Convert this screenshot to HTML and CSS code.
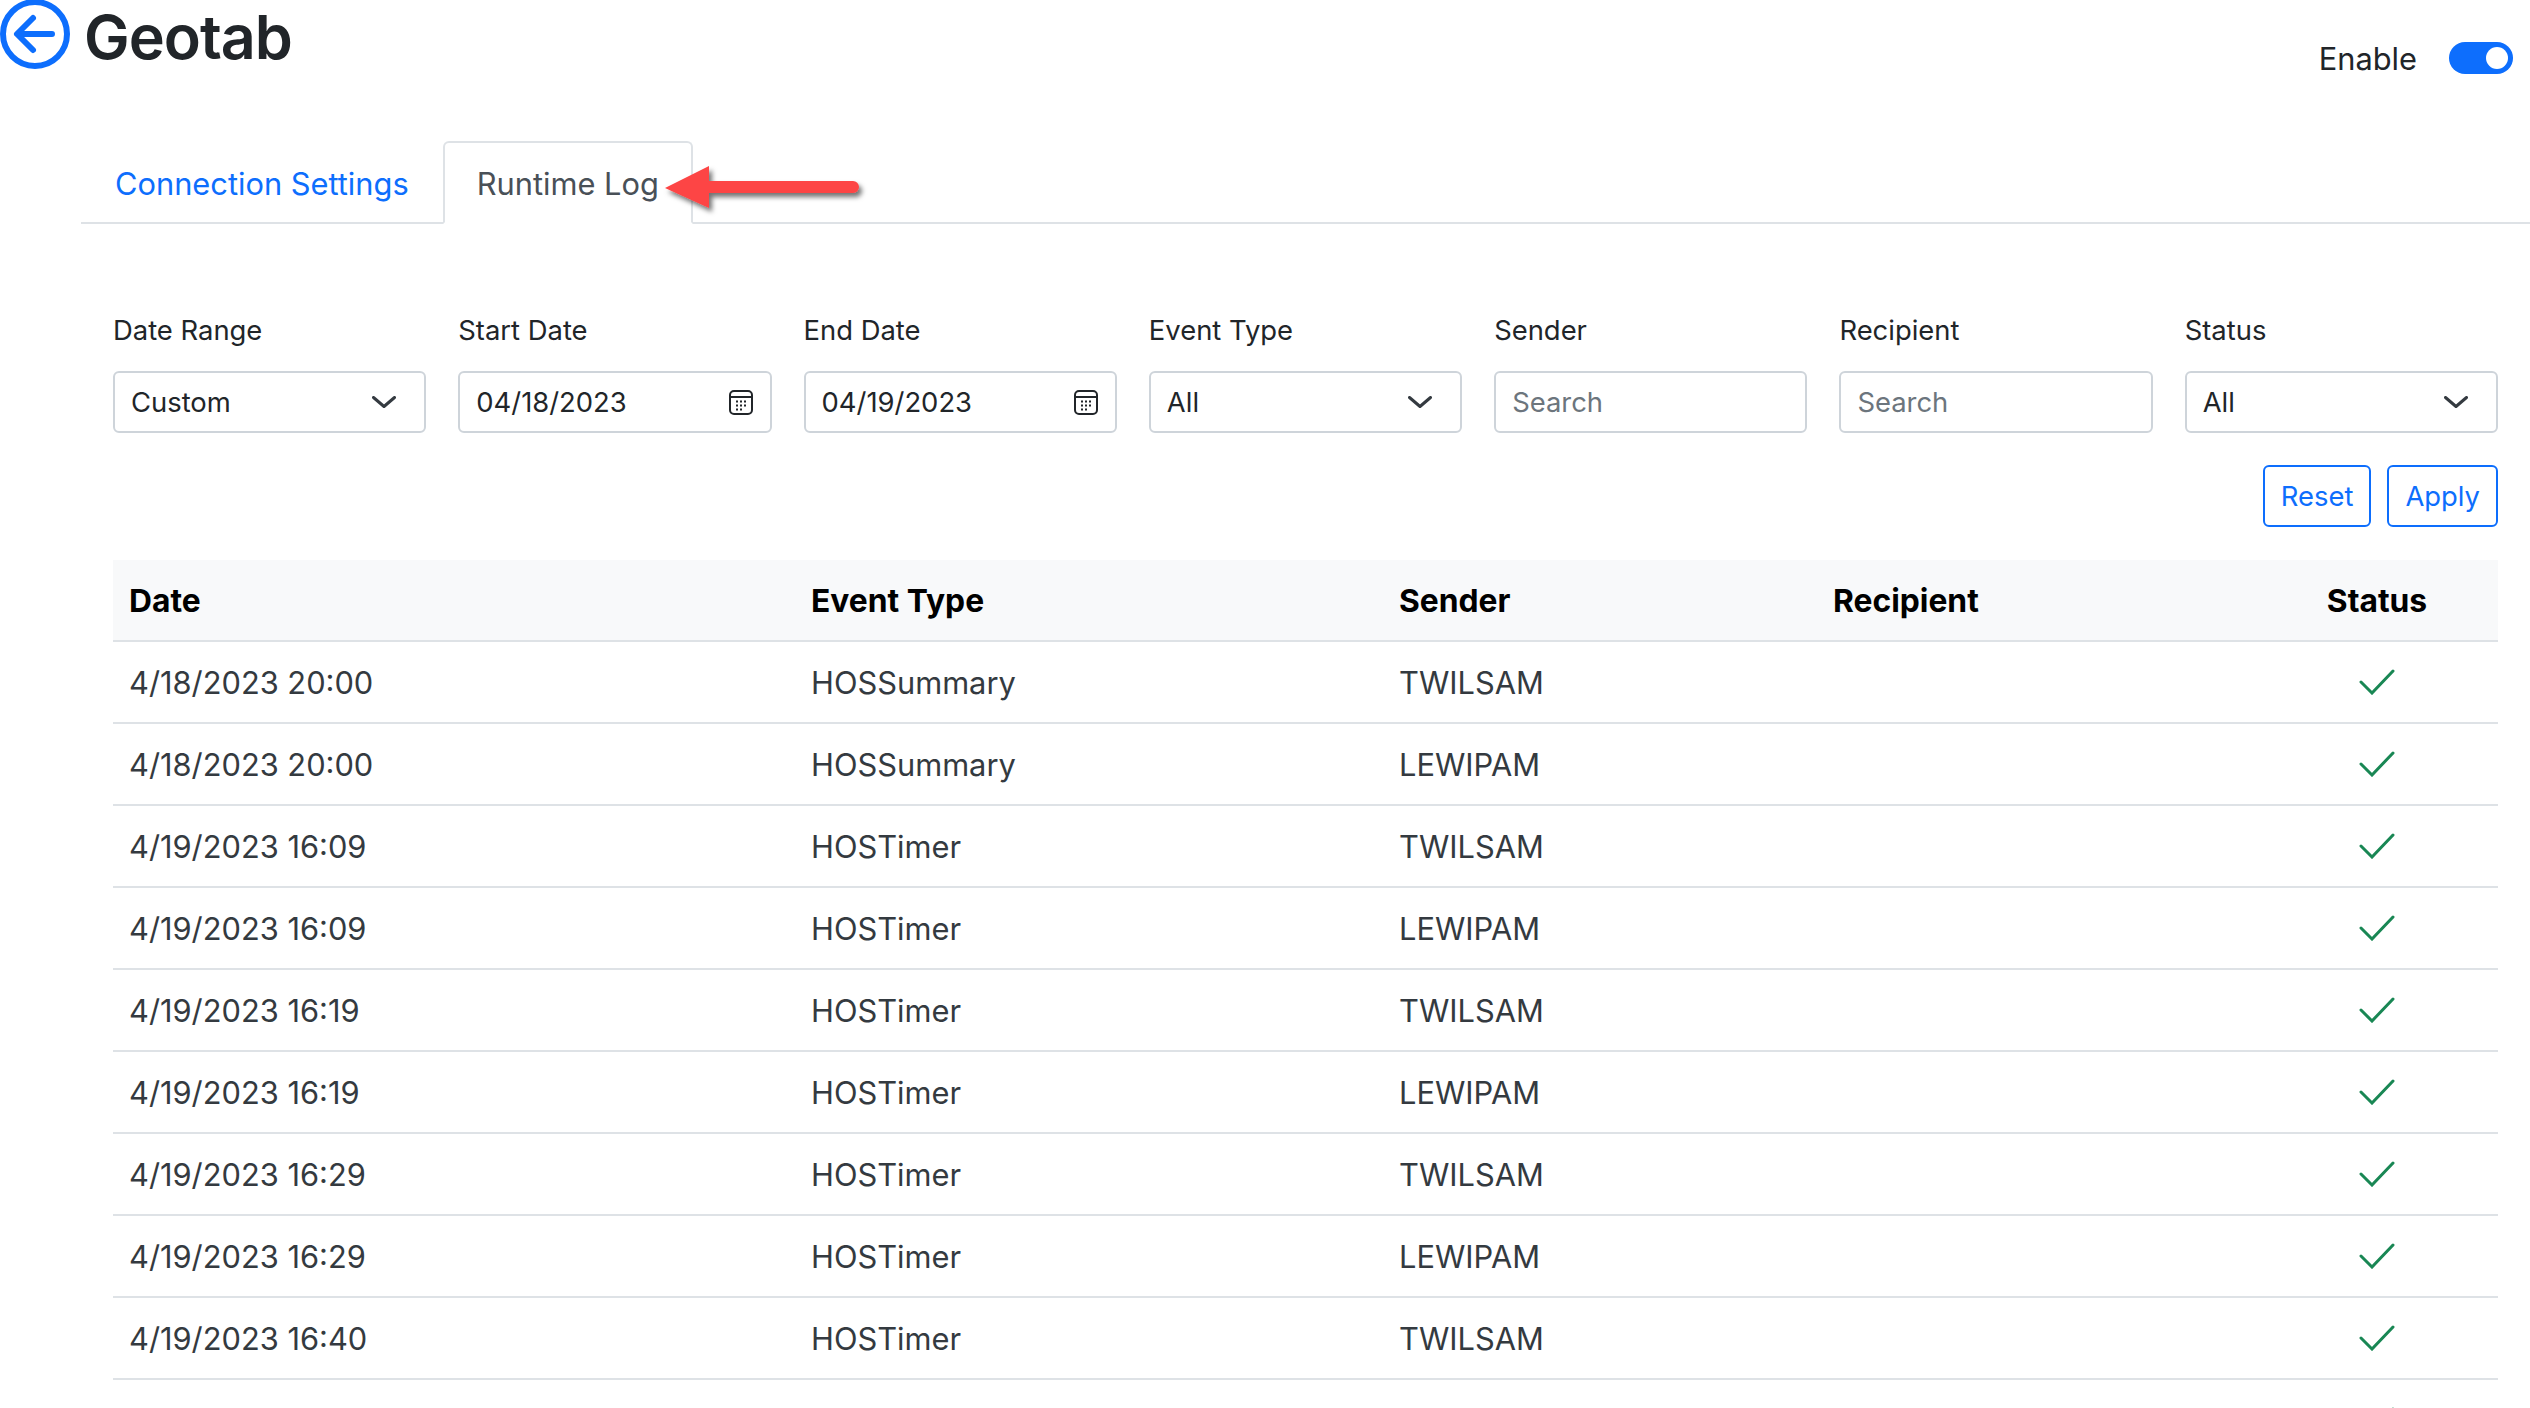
FILE: index.html
```html
<!DOCTYPE html>
<html lang="en">
<head>
<meta charset="utf-8">
<title>Geotab</title>
<link rel="stylesheet" href="styles.css">
</head>
<body>
<header class="top">
  <div class="brand">
    <svg class="back" viewBox="0 0 70 70"><circle cx="35" cy="35" r="32" fill="none" stroke="#0d6efd" stroke-width="6"/><path d="M52 35H18M33 19L17 35L33 51" fill="none" stroke="#0d6efd" stroke-width="6" stroke-linecap="round" stroke-linejoin="round"/></svg>
    <h1 class="title">Geotab</h1>
  </div>
  <div class="enable">
    <span class="enable-label">Enable</span>
    <span class="toggle"><span class="knob"></span></span>
  </div>
</header>
<nav class="tabs">
  <a class="tab">Connection Settings</a>
  <a class="tab active">Runtime Log</a>
  <svg class="callout" viewBox="0 0 220 70"><defs><filter id="s" x="-20%" y="-30%" width="140%" height="170%"><feDropShadow dx="3" dy="4" stdDeviation="2.5" flood-color="#000" flood-opacity=".55"/></filter></defs><path d="M6 27L50 5V20H194a6 6 0 0 1 0 12H50V47Z" fill="#fd4444" filter="url(#s)"/></svg>
</nav>
<main class="content">
  <section class="filters">
    <div class="field"><label>Date Range</label><div class="control"><span>Custom</span><svg class="chev" viewBox="0 0 24 12"><path d="M1.5 1.5L12 10.5L22.5 1.5" fill="none" stroke="#343a40" stroke-width="3" stroke-linecap="round" stroke-linejoin="round"/></svg></div></div>
    <div class="field"><label>Start Date</label><div class="control"><span>04/18/2023</span><svg class="cal" viewBox="0 0 24 25"><rect x="1" y="1" width="22" height="23" rx="4" fill="none" stroke="#212529" stroke-width="2"/><path d="M1 7H23" stroke="#212529" stroke-width="2"/><path d="M7 11.5h2M11 11.5h2M15 11.5h2M7 15.5h2M11 15.5h2M15 15.5h2M7 19.5h2M11 19.5h2" stroke="#212529" stroke-width="2.2"/></svg></div></div>
    <div class="field"><label>End Date</label><div class="control"><span>04/19/2023</span><svg class="cal" viewBox="0 0 24 25"><rect x="1" y="1" width="22" height="23" rx="4" fill="none" stroke="#212529" stroke-width="2"/><path d="M1 7H23" stroke="#212529" stroke-width="2"/><path d="M7 11.5h2M11 11.5h2M15 11.5h2M7 15.5h2M11 15.5h2M15 15.5h2M7 19.5h2M11 19.5h2" stroke="#212529" stroke-width="2.2"/></svg></div></div>
    <div class="field"><label>Event Type</label><div class="control"><span>All</span><svg class="chev" viewBox="0 0 24 12"><path d="M1.5 1.5L12 10.5L22.5 1.5" fill="none" stroke="#343a40" stroke-width="3" stroke-linecap="round" stroke-linejoin="round"/></svg></div></div>
    <div class="field"><label>Sender</label><div class="control placeholder"><span>Search</span></div></div>
    <div class="field"><label>Recipient</label><div class="control placeholder"><span>Search</span></div></div>
    <div class="field"><label>Status</label><div class="control"><span>All</span><svg class="chev" viewBox="0 0 24 12"><path d="M1.5 1.5L12 10.5L22.5 1.5" fill="none" stroke="#343a40" stroke-width="3" stroke-linecap="round" stroke-linejoin="round"/></svg></div></div>
  </section>
  <div class="actions"><button class="btn">Reset</button><button class="btn">Apply</button></div>
  <table class="log">
    <colgroup><col class="c1"><col class="c2"><col class="c3"><col class="c4"><col class="c5"></colgroup>
    <thead><tr><th>Date</th><th>Event Type</th><th>Sender</th><th>Recipient</th><th class="status">Status</th></tr></thead>
    <tbody>
      <tr><td>4/18/2023 20:00</td><td>HOSSummary</td><td>TWILSAM</td><td></td><td class="status"><svg class="check" viewBox="0 0 36 26"><path d="M2 13L13 24L34 2" fill="none" stroke="#198754" stroke-width="3" stroke-linecap="round"/></svg></td></tr>
      <tr><td>4/18/2023 20:00</td><td>HOSSummary</td><td>LEWIPAM</td><td></td><td class="status"><svg class="check" viewBox="0 0 36 26"><path d="M2 13L13 24L34 2" fill="none" stroke="#198754" stroke-width="3" stroke-linecap="round"/></svg></td></tr>
      <tr><td>4/19/2023 16:09</td><td>HOSTimer</td><td>TWILSAM</td><td></td><td class="status"><svg class="check" viewBox="0 0 36 26"><path d="M2 13L13 24L34 2" fill="none" stroke="#198754" stroke-width="3" stroke-linecap="round"/></svg></td></tr>
      <tr><td>4/19/2023 16:09</td><td>HOSTimer</td><td>LEWIPAM</td><td></td><td class="status"><svg class="check" viewBox="0 0 36 26"><path d="M2 13L13 24L34 2" fill="none" stroke="#198754" stroke-width="3" stroke-linecap="round"/></svg></td></tr>
      <tr><td>4/19/2023 16:19</td><td>HOSTimer</td><td>TWILSAM</td><td></td><td class="status"><svg class="check" viewBox="0 0 36 26"><path d="M2 13L13 24L34 2" fill="none" stroke="#198754" stroke-width="3" stroke-linecap="round"/></svg></td></tr>
      <tr><td>4/19/2023 16:19</td><td>HOSTimer</td><td>LEWIPAM</td><td></td><td class="status"><svg class="check" viewBox="0 0 36 26"><path d="M2 13L13 24L34 2" fill="none" stroke="#198754" stroke-width="3" stroke-linecap="round"/></svg></td></tr>
      <tr><td>4/19/2023 16:29</td><td>HOSTimer</td><td>TWILSAM</td><td></td><td class="status"><svg class="check" viewBox="0 0 36 26"><path d="M2 13L13 24L34 2" fill="none" stroke="#198754" stroke-width="3" stroke-linecap="round"/></svg></td></tr>
      <tr><td>4/19/2023 16:29</td><td>HOSTimer</td><td>LEWIPAM</td><td></td><td class="status"><svg class="check" viewBox="0 0 36 26"><path d="M2 13L13 24L34 2" fill="none" stroke="#198754" stroke-width="3" stroke-linecap="round"/></svg></td></tr>
      <tr><td>4/19/2023 16:40</td><td>HOSTimer</td><td>TWILSAM</td><td></td><td class="status"><svg class="check" viewBox="0 0 36 26"><path d="M2 13L13 24L34 2" fill="none" stroke="#198754" stroke-width="3" stroke-linecap="round"/></svg></td></tr>
      <tr><td>4/19/2023 16:40</td><td>HOSTimer</td><td>LEWIPAM</td><td></td><td class="status"><svg class="check" viewBox="0 0 36 26"><path d="M2 13L13 24L34 2" fill="none" stroke="#198754" stroke-width="3" stroke-linecap="round"/></svg></td></tr>
    </tbody>
  </table>
</main>
</body>
</html>
```
FILE: styles.css
```css
* { box-sizing: border-box; }
html, body { margin: 0; height: 100%; overflow: hidden; background: #fff; }
body { font-family: Inter, "Liberation Sans", sans-serif; font-size: 30.8px; line-height: 48px; color: #212529; }

.top { display: flex; justify-content: space-between; height: 141px; }
.brand { display: flex; align-items: flex-start; gap: 14px; margin-top: -1px; }
.back { width: 70px; height: 70px; flex: none; }
.title { margin: 5px 0 0; font-size: 61px; line-height: 66px; font-weight: 600; letter-spacing: -1px; }
.enable { display: flex; align-items: center; align-self: flex-start; gap: 32px; margin: 33px 17px 0 0; }
.enable-label { padding-top: 2px; }
.toggle { width: 64px; height: 32px; border-radius: 16px; background: #0d6efd; display: flex; justify-content: flex-end; align-items: center; padding-right: 5px; }
.knob { width: 22px; height: 22px; border-radius: 50%; background: #fff; }

.tabs { position: relative; display: flex; margin-left: 81px; height: 83px; border-bottom: 2px solid #dee2e6; }
.tab { padding: 17px 32px 0; height: 83px; color: #0d6efd; border: 2px solid transparent; border-radius: 6px 6px 0 0; }
.tab.active { color: #495057; background: #fff; border-color: #dee2e6 #dee2e6 #fff; }
.callout { position: absolute; left: 578px; top: 20px; width: 220px; height: 70px; }

.content { padding: 0 32px 0 113px; }
.filters { display: grid; grid-template-columns: repeat(7, 1fr); gap: 32px; padding-top: 82px; font-size: 27.4px; }
.field label { display: block; line-height: 48px; margin-bottom: 17px; }
.control { display: flex; align-items: center; justify-content: space-between; height: 62px; padding: 0 15px 0 16px; border: 2px solid #ced4da; border-radius: 6px; }
.placeholder { color: #6c757d; }
.chev { width: 24px; height: 12px; margin-right: 13px; }
.cal { width: 24px; height: 25px; margin-right: 2px; }

.actions { display: flex; justify-content: flex-end; gap: 16px; margin-top: 32px; }
.btn { height: 62px; padding: 0 16px; font: inherit; font-size: 27.4px; color: #0d6efd; background: #fff; border: 2px solid #0d6efd; border-radius: 6px; }

.log { width: 100%; margin-top: 33px; border-collapse: collapse; table-layout: fixed; }
.c1 { width: 682px; } .c2 { width: 588px; } .c3 { width: 434px; } .c4 { width: 439px; } .c5 { width: 242px; }
.log th, .log td { height: 82px; padding: 0 16px; text-align: left; border-bottom: 2px solid #dee2e6; }
.log th { background: #f8f9fa; color: #000; font-size: 31.8px; font-weight: 700; height: 81px; padding-top: 2px; }
.log td { color: #343a40; padding-top: 1px; }
.log .status { text-align: center; padding-top: 0; }
.log th.status { padding-top: 2px; }
.check { display: block; width: 36px; height: 26px; margin: 0 auto; }
```
